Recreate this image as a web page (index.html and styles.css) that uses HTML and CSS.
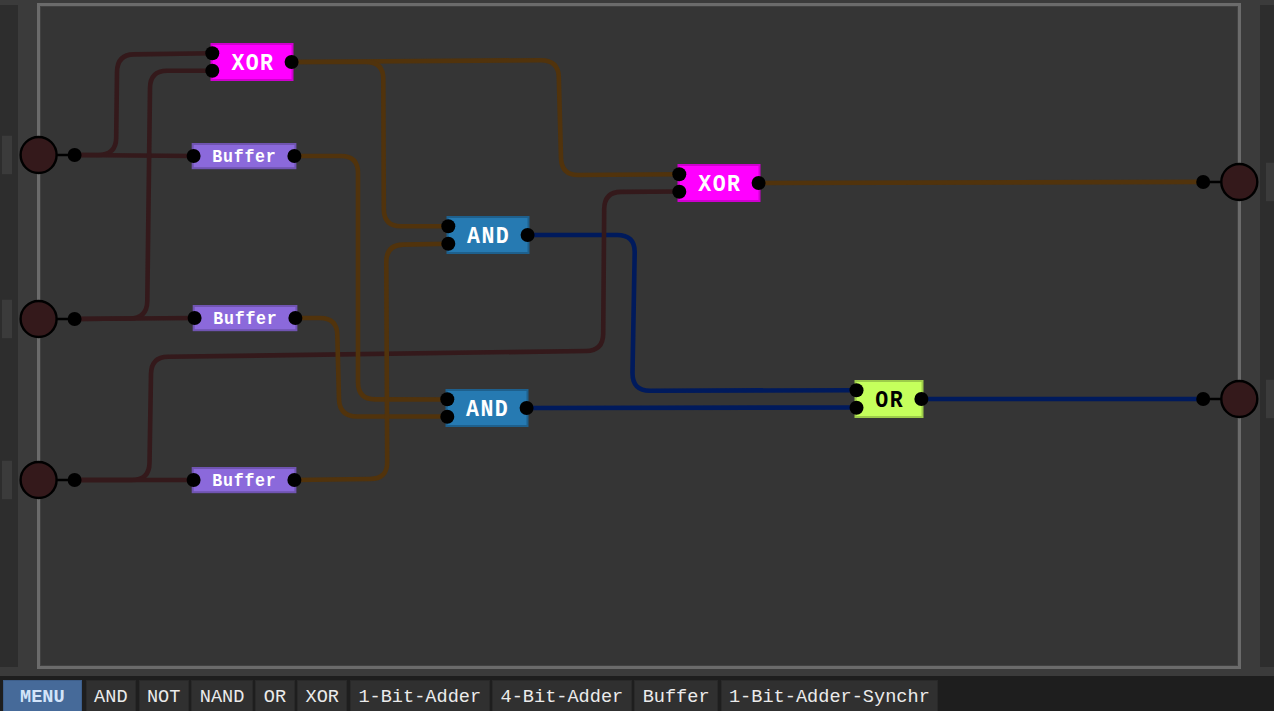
FILE: index.html
```html
<!DOCTYPE html>
<html lang="en">
<head>
<meta charset="utf-8">
<title>Circuit editor</title>
<link rel="stylesheet" href="styles.css">
</head>
<body>
<div class="app">
  <main class="workspace">
    <aside class="rail"></aside>
    <section class="board"></section>
    <aside class="rail rail-right"></aside>
    <svg class="circuit" width="1274" height="676" viewBox="0 0 1274 676">
      <g class="handle">
        <rect x="2" y="135.7" width="10" height="38.5"/>
        <rect x="2" y="299.7" width="10" height="38.5"/>
        <rect x="2" y="460.7" width="10" height="38.5"/>
        <rect x="1266" y="162.7" width="10" height="38.5"/>
        <rect x="1266" y="379.7" width="10" height="38.5"/>
      </g>
      <g class="wire blue">
        <path d="M528 235H617Q634.800 235 634.700 252L632.500 373Q632.500 390.800 650 390.700L856 390.200"/>
        <path d="M527 408L856 407.500"/>
        <path d="M921 399H1203"/>
      </g>
      <g class="wire red">
        <path d="M75 155H98Q116 155 116.200 138L117 72Q117.200 54.600 134 54.400L212 53.300"/>
        <path d="M75 155L194 156"/>
        <path d="M75 319L130 318.500Q147 318.300 147.300 301L150 88Q150.200 70.700 167 70.700H212"/>
        <path d="M75 319L195 318"/>
        <path d="M75 480H132Q149.300 480 149.500 463L151 374Q151.300 357 168 356.800L586 351Q603 350.700 603.200 334L604.200 209Q604.400 192 621 191.900L679 191.500"/>
        <path d="M75 480H194"/>
      </g>
      <g class="wire orange">
        <path d="M292 62L541 60.200Q558.300 60.200 558.800 77L561 158Q561.500 175 578 175L679 174.300"/>
        <path d="M292 62L366 62Q383.300 62 383.300 79L383.800 209Q384 226.300 401 226.300H448"/>
        <path d="M294 156H341Q358 156 358 173V382Q358 399.300 375 399.400L447 399.500"/>
        <path d="M295 318H320Q337 318 337.300 335L339 399Q339.500 416.500 357 416.500H447"/>
        <path d="M294 480L370 479Q387.300 479 387.200 462L386.300 262Q386.300 245 403 244.600L448 243.700"/>
        <path d="M759 183L1203 181.900"/>
      </g>
      <g class="chip xor">
        <rect x="211.500" y="44" width="81" height="36"/>
        <rect x="678.500" y="165" width="81" height="36"/>
      </g>
      <g class="chip and">
        <rect x="447.500" y="217" width="81" height="36"/>
        <rect x="446.500" y="390" width="81" height="36"/>
      </g>
      <g class="chip or"><rect x="855.500" y="381" width="67" height="36"/></g>
      <g class="chip buffer">
        <rect x="192.700" y="144" width="102.700" height="24.200"/>
        <rect x="193.700" y="306" width="102.700" height="24.200"/>
        <rect x="192.700" y="468" width="102.700" height="24.200"/>
      </g>
      <g class="label large">
        <text x="252.900" y="69.600">XOR</text>
        <text x="719.900" y="190.600">XOR</text>
        <text x="488.600" y="242.600">AND</text>
        <text x="487.600" y="415.600">AND</text>
        <text class="dark" x="889.700" y="406.600">OR</text>
      </g>
      <g class="label small">
        <text x="244.400" y="161.700">Buffer</text>
        <text x="245.400" y="323.700">Buffer</text>
        <text x="244.400" y="485.700">Buffer</text>
      </g>
      <g class="lead">
        <path d="M57 155H75M57 319H75M57 480H75M1203 182H1221M1203 399H1221"/>
      </g>
      <g class="pin">
        <circle cx="74.600" cy="155" r="7"/>
        <circle cx="74.600" cy="319" r="7"/>
        <circle cx="74.600" cy="480" r="7"/>
        <circle cx="1203.200" cy="182" r="7"/>
        <circle cx="1203.200" cy="399" r="7"/>
        <circle cx="212.300" cy="53.300" r="7"/>
        <circle cx="212.300" cy="70.700" r="7"/>
        <circle cx="291.600" cy="62" r="7"/>
        <circle cx="193.600" cy="156" r="7"/>
        <circle cx="294.400" cy="156" r="7"/>
        <circle cx="194.600" cy="318" r="7"/>
        <circle cx="295.400" cy="318" r="7"/>
        <circle cx="193.600" cy="480" r="7"/>
        <circle cx="294.400" cy="480" r="7"/>
        <circle cx="448.300" cy="226.300" r="7"/>
        <circle cx="448.300" cy="243.700" r="7"/>
        <circle cx="527.600" cy="235" r="7"/>
        <circle cx="447.300" cy="399.300" r="7"/>
        <circle cx="447.300" cy="416.700" r="7"/>
        <circle cx="526.600" cy="408" r="7"/>
        <circle cx="679.300" cy="174.300" r="7"/>
        <circle cx="679.300" cy="191.700" r="7"/>
        <circle cx="758.600" cy="183" r="7"/>
        <circle cx="856.500" cy="390.300" r="7"/>
        <circle cx="856.500" cy="407.700" r="7"/>
        <circle cx="921.400" cy="399" r="7"/>
      </g>
      <g class="terminal">
        <circle cx="38.600" cy="155" r="18"/>
        <circle cx="38.600" cy="319" r="18"/>
        <circle cx="38.600" cy="480" r="18"/>
        <circle cx="1239.300" cy="182" r="18"/>
        <circle cx="1239.300" cy="399" r="18"/>
      </g>
    </svg>
  </main>
  <nav class="toolbar">
    <button class="tool menu">MENU</button>
    <button class="tool">AND</button>
    <button class="tool">NOT</button>
    <button class="tool">NAND</button>
    <button class="tool">OR</button>
    <button class="tool">XOR</button>
    <button class="tool">1-Bit-Adder</button>
    <button class="tool">4-Bit-Adder</button>
    <button class="tool">Buffer</button>
    <button class="tool">1-Bit-Adder-Synchr</button>
  </nav>
</div>
</body>
</html>
```
FILE: styles.css
```css
* { box-sizing: border-box; }
body { margin: 0; background: #3b3b3b; font-family: "Liberation Mono", monospace; }
.app { height: 711px; display: flex; flex-direction: column; overflow: hidden; }
.workspace {
  position: relative;
  flex: 1;
  display: flex;
  padding: 3px 0 7px;
  background: #3b3b3b;
}
.rail { width: 18px; margin: 2px 0; background: #2d2d2d; }
.rail-right { width: 14px; }
.board {
  flex: 1;
  margin: 0 19px;
  border: 3px solid #6b6b6b;
  background: #353535;
  box-shadow: inset 0 0 0 1px #414141;
}
.circuit { position: absolute; left: 0; top: 0; }
.handle { fill: #3b3b3b; }
.wire { fill: none; stroke-width: 4.6; }
.red { stroke: #34191b; }
.orange { stroke: #51330c; }
.blue { stroke: #001a5c; }
.chip { stroke-width: 2; }
.xor { fill: #ff00ff; stroke: #cf00cf; }
.and { fill: #267ab2; stroke: #1e608d; }
.or { fill: #c5ff5c; stroke: #9dcb4a; }
.buffer { fill: #8b69db; stroke: #7054b1; }
.label { fill: #fff; font-weight: bold; text-anchor: middle; }
.label text { transform-box: fill-box; transform-origin: center; }
.large { font-size: 23.5px; letter-spacing: 1.5px; }
.large text { transform: scaleX(0.92); }
.small { font-size: 17.5px; letter-spacing: 0.8px; }
.small text { transform: scaleX(0.95); }
.dark { fill: #000; }
.lead { stroke: #000; stroke-width: 2.6; }
.pin { fill: #000; }
.terminal { fill: #34191b; stroke: #000; stroke-width: 2.4; }
.toolbar {
  height: 35px;
  display: flex;
  gap: 2.600px;
  padding: 4px 0 0 2.600px;
  background: #1e1e1e;
}
.tool {
  border: 1px solid #292929;
  border-bottom: 0;
  margin: 0;
  padding: 3px 7.400px 0;
  background: #303030;
  color: #ebebeb;
  font: 18.600px/27px "Liberation Mono", monospace;
}
.menu {
  width: 79.500px;
  margin-right: 1px;
  padding: 3px 0 0;
  border-color: #3d5e8a;
  background: #466a99;
  color: #d3e4fa;
  font-weight: bold;
}
```
